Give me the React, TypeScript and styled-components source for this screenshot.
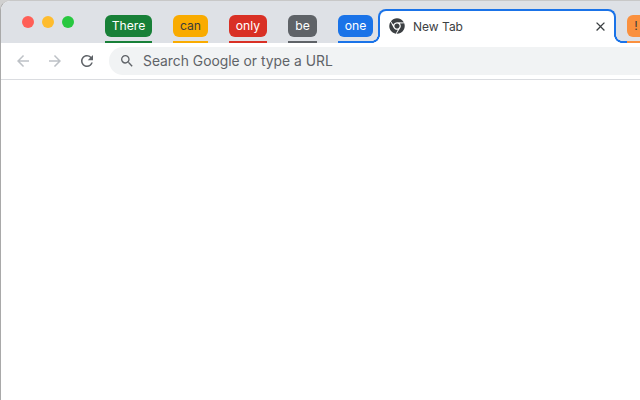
import React from "react";
import styled, { createGlobalStyle } from "styled-components";
import { FaChrome } from "react-icons/fa";
import { MdArrowBack, MdArrowForward, MdClose, MdRefresh, MdSearch } from "react-icons/md";

const GlobalStyle = createGlobalStyle`
  html, body { margin: 0; padding: 0; background: #fff; }
  body { font-family: "Inter", "Liberation Sans", sans-serif; }
`;

const Page = styled.div`
  width: 640px;
  height: 400px;
  overflow: hidden;
  background: #d0d0d0;
`;

const Browser = styled.div`
  width: 660px;
  height: 400px;
  box-sizing: border-box;
  background: #fff;
  border-top: 1px solid #c8c8c8;
  border-left: 1px solid #a9a9a9;
  border-top-left-radius: 10px;
  overflow: hidden;
`;

const TabStrip = styled.div`
  height: 42px;
  display: flex;
  align-items: stretch;
  background: #dee1e6;
  padding-left: 21px;
`;

const Lights = styled.div`
  display: flex;
  flex-shrink: 0;
  gap: 8px;
  padding-top: 15px;
  margin-right: 31px;
`;

const Light = styled.span<{ $color: string }>`
  width: 12px;
  height: 12px;
  border-radius: 50%;
  background: ${(p) => p.$color};
`;

const Group = styled.div<{ $gap?: number; $lead?: number }>`
  display: flex;
  flex-direction: column;
  flex-shrink: 0;
  justify-content: space-between;
  padding-top: 14px;
  margin-left: ${(p) => p.$lead ?? 0}px;
  margin-right: ${(p) => p.$gap ?? 21}px;
`;

const Chip = styled.div<{ $bg: string; $fg?: string; $width: number }>`
  width: ${(p) => p.$width}px;
  height: 22px;
  box-sizing: border-box;
  border-radius: 6px;
  background: ${(p) => p.$bg};
  color: ${(p) => p.$fg ?? "#fff"};
  font-size: 12.2px;
  line-height: 22px;
  text-align: center;
`;

const GroupLine = styled.div<{ $bg: string; $joined?: boolean }>`
  height: 2px;
  background: ${(p) => p.$bg};
  ${(p) => p.$joined && "margin-left: -5px; border-left: 5px solid #1a73e8;"}
`;

const ActiveTab = styled.div`
  position: relative;
  flex-shrink: 0;
  width: 238px;
  height: 34px;
  margin-top: 8px;
  box-sizing: border-box;
  padding: 0 6px 2px 9px;
  display: flex;
  align-items: center;
  gap: 8px;
  background: #fff;
  border: 2px solid #1a73e8;
  border-bottom: 0;
  border-radius: 8px 8px 0 0;
  color: #3c4043;
  font-size: 12px;

  &::before,
  &::after {
    content: "";
    position: absolute;
    bottom: 0;
    width: 8px;
    height: 8px;
  }
  &::before {
    left: -8px;
    background: radial-gradient(circle at 0 0, #dee1e6 5.6px, #1a73e8 6px, #1a73e8 7.6px, #fff 8px);
  }
  &::after {
    right: -8px;
    background: radial-gradient(circle at 100% 0, #dee1e6 5.6px, #1a73e8 6px, #1a73e8 7.6px, #fff 8px);
  }
`;

const TabTitle = styled.span`
  flex: 1;
`;

const ChromeMark = styled(FaChrome)`
  width: 16px;
  height: 16px;
  color: #3c4043;
`;

const CloseMark = styled(MdClose)`
  width: 15px;
  height: 15px;
  color: #3c4043;
`;

const Toolbar = styled.div`
  height: 36px;
  display: flex;
  align-items: center;
  background: #fff;
  border-bottom: 1px solid #dadce0;
  padding-left: 13px;
`;

const NavButton = styled.div<{ $muted?: boolean }>`
  width: 18px;
  height: 18px;
  margin-right: 14px;
  display: flex;
  color: ${(p) => (p.$muted ? "#bdc1c6" : "#5f6368")};

  svg {
    width: 18px;
    height: 18px;
  }
`;

const Omnibox = styled.div`
  flex: 1;
  height: 28px;
  margin-left: -1px;
  display: flex;
  align-items: center;
  gap: 8px;
  padding-left: 10px;
  border-radius: 14px 0 0 14px;
  background: #f1f3f4;
  color: #5f6368;
  font-size: 13.85px;
`;

const SearchMark = styled(MdSearch)`
  width: 16px;
  height: 16px;
  color: #5f6368;
`;

const Content = styled.div`
  height: 320px;
  background: #fff;
`;

const groups = [
  { label: "There", bg: "#188038", width: 47 },
  { label: "can", bg: "#f9ab00", fg: "#3c3c3c", width: 35 },
  { label: "only", bg: "#d93025", width: 38 },
  { label: "be", bg: "#5f6368", width: 29 },
  { label: "one", bg: "#1a73e8", width: 35, gap: 5 },
];

export default function App() {
  return (
    <Page>
      <GlobalStyle />
      <Browser>
        <TabStrip>
          <Lights>
            <Light $color="#ff5f57" />
            <Light $color="#febc2e" />
            <Light $color="#28c840" />
          </Lights>
          {groups.map((g) => (
            <Group key={g.label} $gap={g.gap}>
              <Chip $bg={g.bg} $fg={g.fg} $width={g.width}>
                {g.label}
              </Chip>
              <GroupLine $bg={g.bg} />
            </Group>
          ))}
          <ActiveTab>
            <ChromeMark />
            <TabTitle>New Tab</TabTitle>
            <CloseMark />
          </ActiveTab>
          <Group $lead={11}>
            <Chip $bg="#fa903e" $fg="#3c3c3c" $width={18}>
              !
            </Chip>
            <GroupLine $bg="#fa903e" $joined />
          </Group>
        </TabStrip>
        <Toolbar>
          <NavButton $muted>
            <MdArrowBack />
          </NavButton>
          <NavButton $muted>
            <MdArrowForward />
          </NavButton>
          <NavButton>
            <MdRefresh />
          </NavButton>
          <Omnibox>
            <SearchMark />
            Search Google or type a URL
          </Omnibox>
        </Toolbar>
        <Content />
      </Browser>
    </Page>
  );
}
